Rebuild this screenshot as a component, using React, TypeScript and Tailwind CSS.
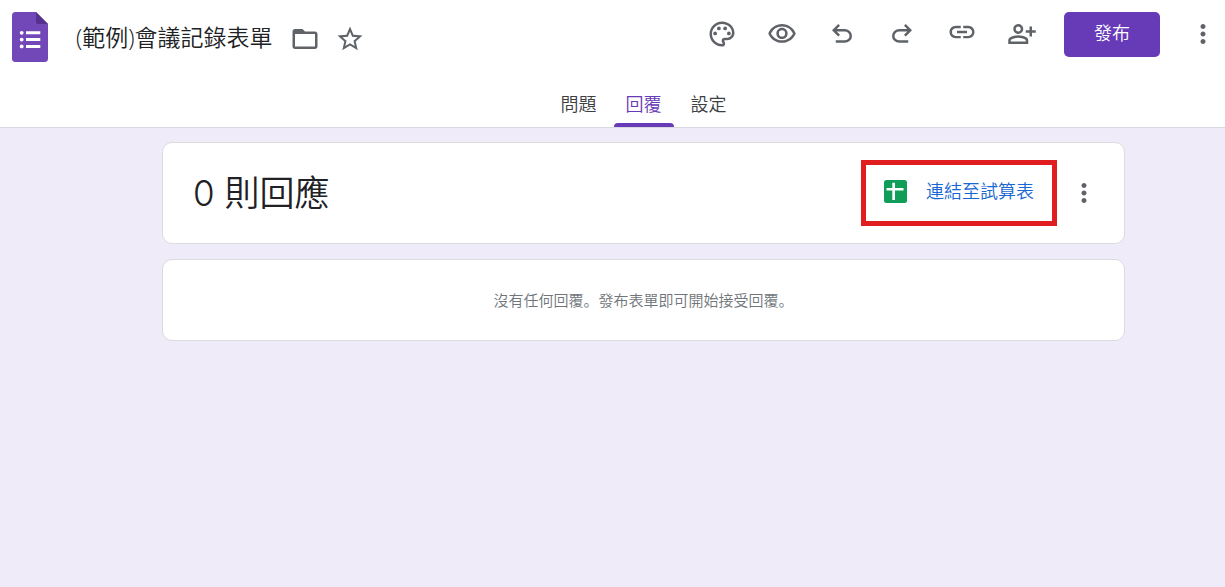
import React from "react";
import {
  MdLink,
  MdMoreVert,
  MdOutlinePalette,
  MdOutlineVisibility,
  MdStarBorder,
} from "react-icons/md";

type IconButtonProps = {
  label: string;
  children: React.ReactNode;
};

function ToolbarButton({ label, children }: IconButtonProps) {
  return (
    <button
      type="button"
      aria-label={label}
      className="flex h-[45px] w-[60px] items-center justify-center pb-0.5"
    >
      {children}
    </button>
  );
}

function SymbolIcon({ d }: { d: string }) {
  return (
    <svg viewBox="0 -960 960 960" className="size-[30px]" fill="currentColor" aria-hidden="true">
      <path d={d} />
    </svg>
  );
}

function FormsLogo() {
  return (
    <svg viewBox="0 0 36 50" className="h-[50px] w-9" aria-hidden="true">
      <path
        d="M3.5 0H24L36 12V46.500a3.500 3.500 0 0 1-3.500 3.500h-29A3.500 3.500 0 0 1 0 46.500v-43A3.500 3.500 0 0 1 3.500 0Z"
        fill="#7248b9"
      />
      <path d="M24 0l12 12H26a2 2 0 0 1-2-2Z" fill="#55308f" />
      <g fill="#fff">
        <circle cx="9.700" cy="20.800" r="1.900" />
        <circle cx="9.700" cy="27.600" r="1.900" />
        <circle cx="9.700" cy="34.400" r="1.900" />
        <path d="M14 19.300h14.300v3H14zM14 26.100h14.300v3H14zM14 32.900h14.300v3H14z" />
      </g>
    </svg>
  );
}

function SheetsIcon() {
  return (
    <svg viewBox="0 0 23 23" className="size-[23px]" aria-hidden="true">
      <rect width="23" height="23" rx="2.500" fill="#0f9d58" />
      <path d="M8.300 2.700h2.700v5.200h8.500v2.700H11v9.400H8.300v-9.400H2.500V7.900h5.800Z" fill="#fff" />
    </svg>
  );
}

const UNDO =
  "M280-200v-80h284q63 0 109.500-40T720-420q0-60-46.500-100T564-560H312l104 104-56 56-200-200 200-200 56 56-104 104h252q97 0 166.500 63T800-420q0 94-69.500 157T564-200H280Z";
const REDO =
  "M396-200q-97 0-166.500-63T160-420q0-94 69.500-157T396-640h252L544-744l56-56 200 200-200 200-56-56 104-104H396q-63 0-109.500 40T240-420q0 60 46.500 100T396-280h284v80H396Z";
const PERSON_ADD =
  "M720-400v-120H600v-80h120v-120h80v120h120v80H800v120h-80Zm-360-80q-66 0-113-47t-47-113q0-66 47-113t113-47q66 0 113 47t47 113q0 66-47 113t-113 47ZM40-160v-112q0-34 17.500-62.500T104-378q62-31 126-46.500T360-440q66 0 130 15.500T616-378q29 15 46.500 43.500T680-272v112H40Zm80-80h480v-32q0-11-5.500-20T580-306q-54-27-109-40.500T360-360q-56 0-111 13.500T140-306q-9 5-14.500 14t-5.500 20v32Zm240-320q33 0 56.500-23.500T440-640q0-33-23.500-56.500T360-720q-33 0-56.500 23.500T280-640q0 33 23.500 56.500T360-560Z";
const FOLDER =
  "M20 6h-8l-2-2H4c-1.100 0-1.990.9-1.990 2L2 18c0 1.100.9 2 2 2h16c1.100 0 2-.9 2-2V8c0-1.100-.9-2-2-2zm0 12H4V8h16v10z";

const tabs = ["問題", "回覆", "設定"];

export default function App() {
  const [active, setActive] = React.useState("回覆");

  return (
    <div className="flex min-h-screen flex-col bg-[#efebf8] font-['Open_Sans','Noto_Sans_CJK_SC',sans-serif] font-[350] text-[#202124]">
      <header className="border-b border-[#d9d7e0] bg-white">
        <div className="flex items-start justify-between pl-3">
          <div className="flex items-center pt-3">
            <a href="#home" aria-label="Google 表單">
              <FormsLogo />
            </a>
            <h1 className="ml-7 text-[23px] leading-8 whitespace-nowrap">(範例)會議記錄表單</h1>
            <div className="ml-[17px] flex items-center gap-[15px] pt-1 text-[#5f6368]">
              <button type="button" aria-label="移動">
                <svg viewBox="0 0 24 24" className="size-[30px]" fill="currentColor" aria-hidden="true">
                  <path d={FOLDER} />
                </svg>
              </button>
              <button type="button" aria-label="加星號">
                <MdStarBorder size={30} />
              </button>
            </div>
          </div>
          <div className="flex items-center pt-3 text-[#5f6368]">
            <ToolbarButton label="自訂主題">
              <MdOutlinePalette size={30} />
            </ToolbarButton>
            <ToolbarButton label="預覽">
              <MdOutlineVisibility size={30} />
            </ToolbarButton>
            <ToolbarButton label="復原">
              <SymbolIcon d={UNDO} />
            </ToolbarButton>
            <ToolbarButton label="取消復原">
              <SymbolIcon d={REDO} />
            </ToolbarButton>
            <ToolbarButton label="複製連結">
              <MdLink size={30} className="mb-1" />
            </ToolbarButton>
            <ToolbarButton label="新增協作者">
              <SymbolIcon d={PERSON_ADD} />
            </ToolbarButton>
            <button
              type="button"
              className="ml-3 h-[45px] rounded-[5px] bg-[#673ab7] px-[30px] pb-1 text-lg text-white"
            >
              發布
            </button>
            <button type="button" aria-label="更多" className="ml-7 pr-[7px] pb-0.5">
              <MdMoreVert size={30} />
            </button>
          </div>
        </div>
        <nav className="mt-5 flex justify-center gap-[5px] pl-[62px]">
          {tabs.map((tab) => (
            <button
              key={tab}
              type="button"
              onClick={() => setActive(tab)}
              className={
                tab === active
                  ? "flex h-[45px] flex-col items-center justify-between text-lg text-[#673ab7]"
                  : "flex h-[45px] flex-col items-center justify-between text-lg text-[#3c4043]"
              }
            >
              <span className="px-3 pt-2">{tab}</span>
              {tab === active && <span className="h-1 w-full rounded-t bg-[#673ab7]" />}
            </button>
          ))}
        </nav>
      </header>

      <main className="flex flex-col gap-[15px] pt-[14px] pr-[100px] pl-[162px]">
        <section className="flex h-[102px] items-center justify-between rounded-[10px] border border-[#dadce0] bg-white pr-[25px] pl-[30px]">
          <h2 className="font-['Inter','Noto_Sans_CJK_SC',sans-serif] text-[35px] leading-[48px]">
            0 則回應
          </h2>
          <div className="flex items-center gap-3">
            <div className="border-5 border-[#e01e20]">
              <button
                type="button"
                className="flex h-14 items-center gap-[19px] pr-[18px] pb-1 pl-[18px] text-lg text-[#1967d2]"
              >
                <SheetsIcon />
                <span>連結至試算表</span>
              </button>
            </div>
            <button type="button" aria-label="更多選項" className="text-[#5f6368]">
              <MdMoreVert size={30} />
            </button>
          </div>
        </section>
        <section className="flex h-[82px] items-center justify-center rounded-[10px] border border-[#dadce0] bg-white">
          <p className="text-[15px] leading-5 text-[#70757a]">
            沒有任何回覆。發布表單即可開始接受回覆。
          </p>
        </section>
      </main>
    </div>
  );
}
